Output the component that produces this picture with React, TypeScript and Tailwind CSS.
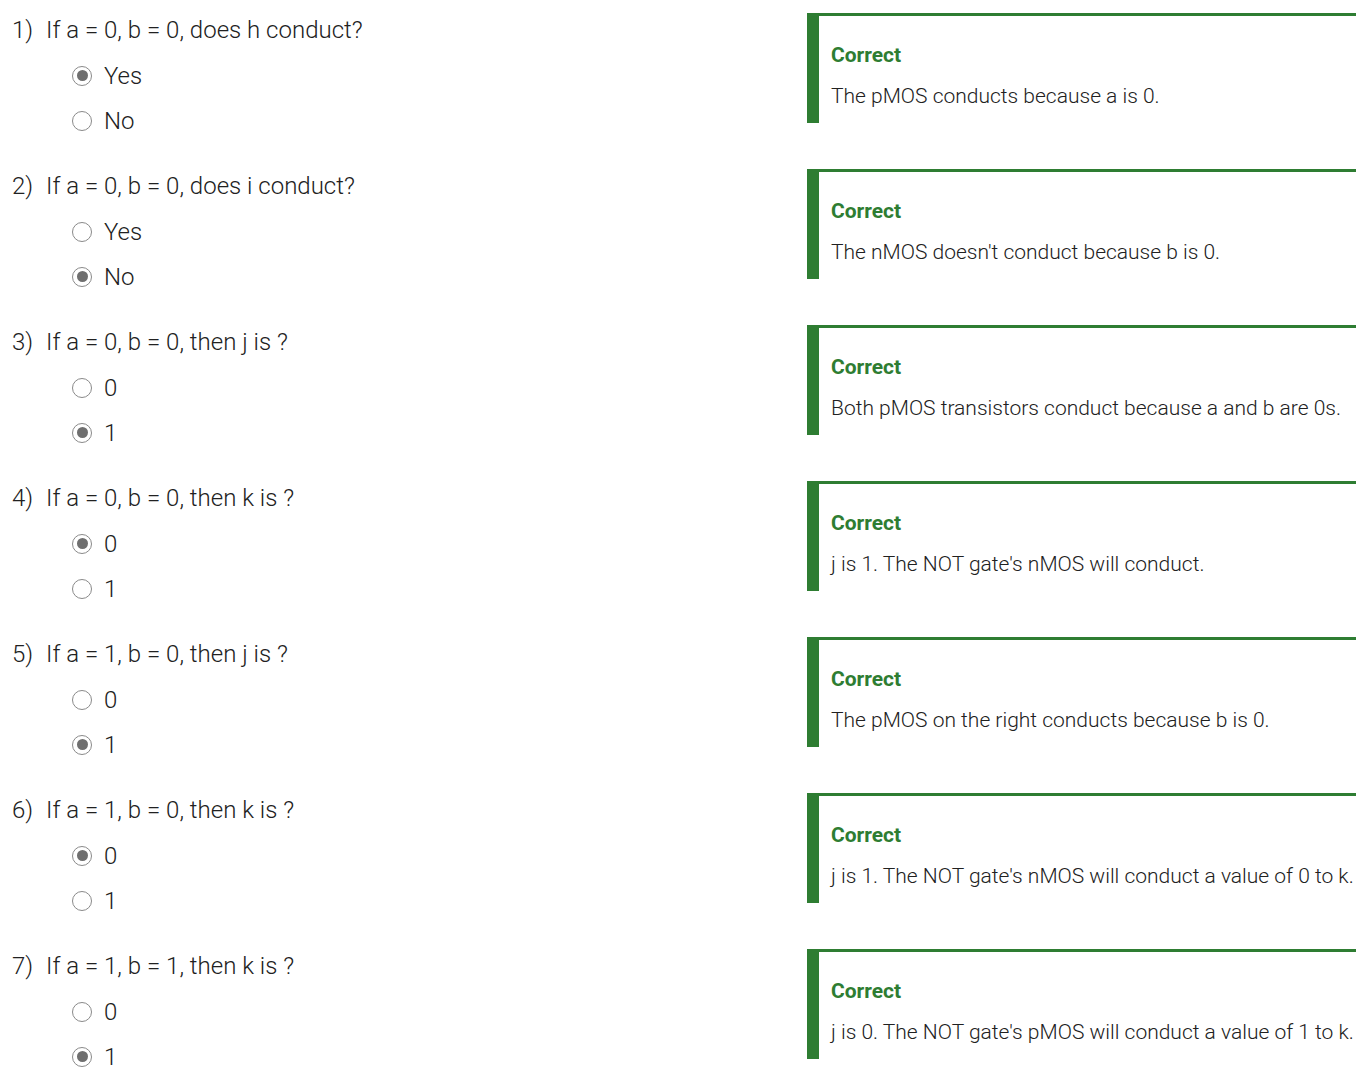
import { useState } from "react";

interface Question {
    id: number;
    text: string;
    options: string[];
    picked: number;
    feedback: string;
}

const questions: Question[] = [
    { id: 1, text: "If a = 0, b = 0, does h conduct?", options: ["Yes", "No"], picked: 0, feedback: "The pMOS conducts because a is 0." },
    { id: 2, text: "If a = 0, b = 0, does i conduct?", options: ["Yes", "No"], picked: 1, feedback: "The nMOS doesn't conduct because b is 0." },
    { id: 3, text: "If a = 0, b = 0, then j is ?", options: ["0", "1"], picked: 1, feedback: "Both pMOS transistors conduct because a and b are 0s." },
    { id: 4, text: "If a = 0, b = 0, then k is ?", options: ["0", "1"], picked: 0, feedback: "j is 1. The NOT gate's nMOS will conduct." },
    { id: 5, text: "If a = 1, b = 0, then j is ?", options: ["0", "1"], picked: 1, feedback: "The pMOS on the right conducts because b is 0." },
    { id: 6, text: "If a = 1, b = 0, then k is ?", options: ["0", "1"], picked: 0, feedback: "j is 1. The NOT gate's nMOS will conduct a value of 0 to k." },
    { id: 7, text: "If a = 1, b = 1, then k is ?", options: ["0", "1"], picked: 1, feedback: "j is 0. The NOT gate's pMOS will conduct a value of 1 to k." },
];

function Radio({ checked }: { checked: boolean }) {
    return (
        <span className="w-[20px] h-[20px] shrink-0 rounded-full border-[1.5px] border-[#8a8a8a] flex items-center justify-center bg-white">
            {checked && <span className="w-[11px] h-[11px] rounded-full bg-[#6f6f6f]" />}
        </span>
    );
}

export default function App() {
    const [answers] = useState(questions.map((q) => q.picked));

    return (
        <div className="w-[1368px] bg-white text-[#212121] font-['Roboto','Liberation_Sans',sans-serif]">
            {questions.map((q, i) => (
                <div key={q.id} className="flex h-[156px]">
                    {/* QUESTION */}
                    <div className="w-[807px] shrink-0 pt-[15px]">
                        <div className="flex h-[30px] items-center text-[24px] font-light leading-[30px]">
                            <span className="w-[46px] shrink-0 pl-[12px]">{q.id})</span>
                            <span>{q.text}</span>
                        </div>
                        <div className="mt-[8px]">
                            {q.options.map((opt, j) => (
                                <div key={opt} className="flex items-center h-[45px] pl-[72px]">
                                    <Radio checked={answers[i] === j} />
                                    <span className="ml-[12px] text-[24px] font-light">{opt}</span>
                                </div>
                            ))}
                        </div>
                    </div>

                    {/* FEEDBACK */}
                    <div className="pt-[13px]">
                        <div className="w-[549px] h-[110px] border-l-[12px] border-t-[3px] border-[#2e7d32] pl-[12px] pt-[25px]">
                            <p className="text-[21px] font-bold text-[#2e7d32] leading-[28px]">Correct</p>
                            <p className="mt-[13px] text-[21px] font-light leading-[28px]">{q.feedback}</p>
                        </div>
                    </div>
                </div>
            ))}
        </div>
    );
}
